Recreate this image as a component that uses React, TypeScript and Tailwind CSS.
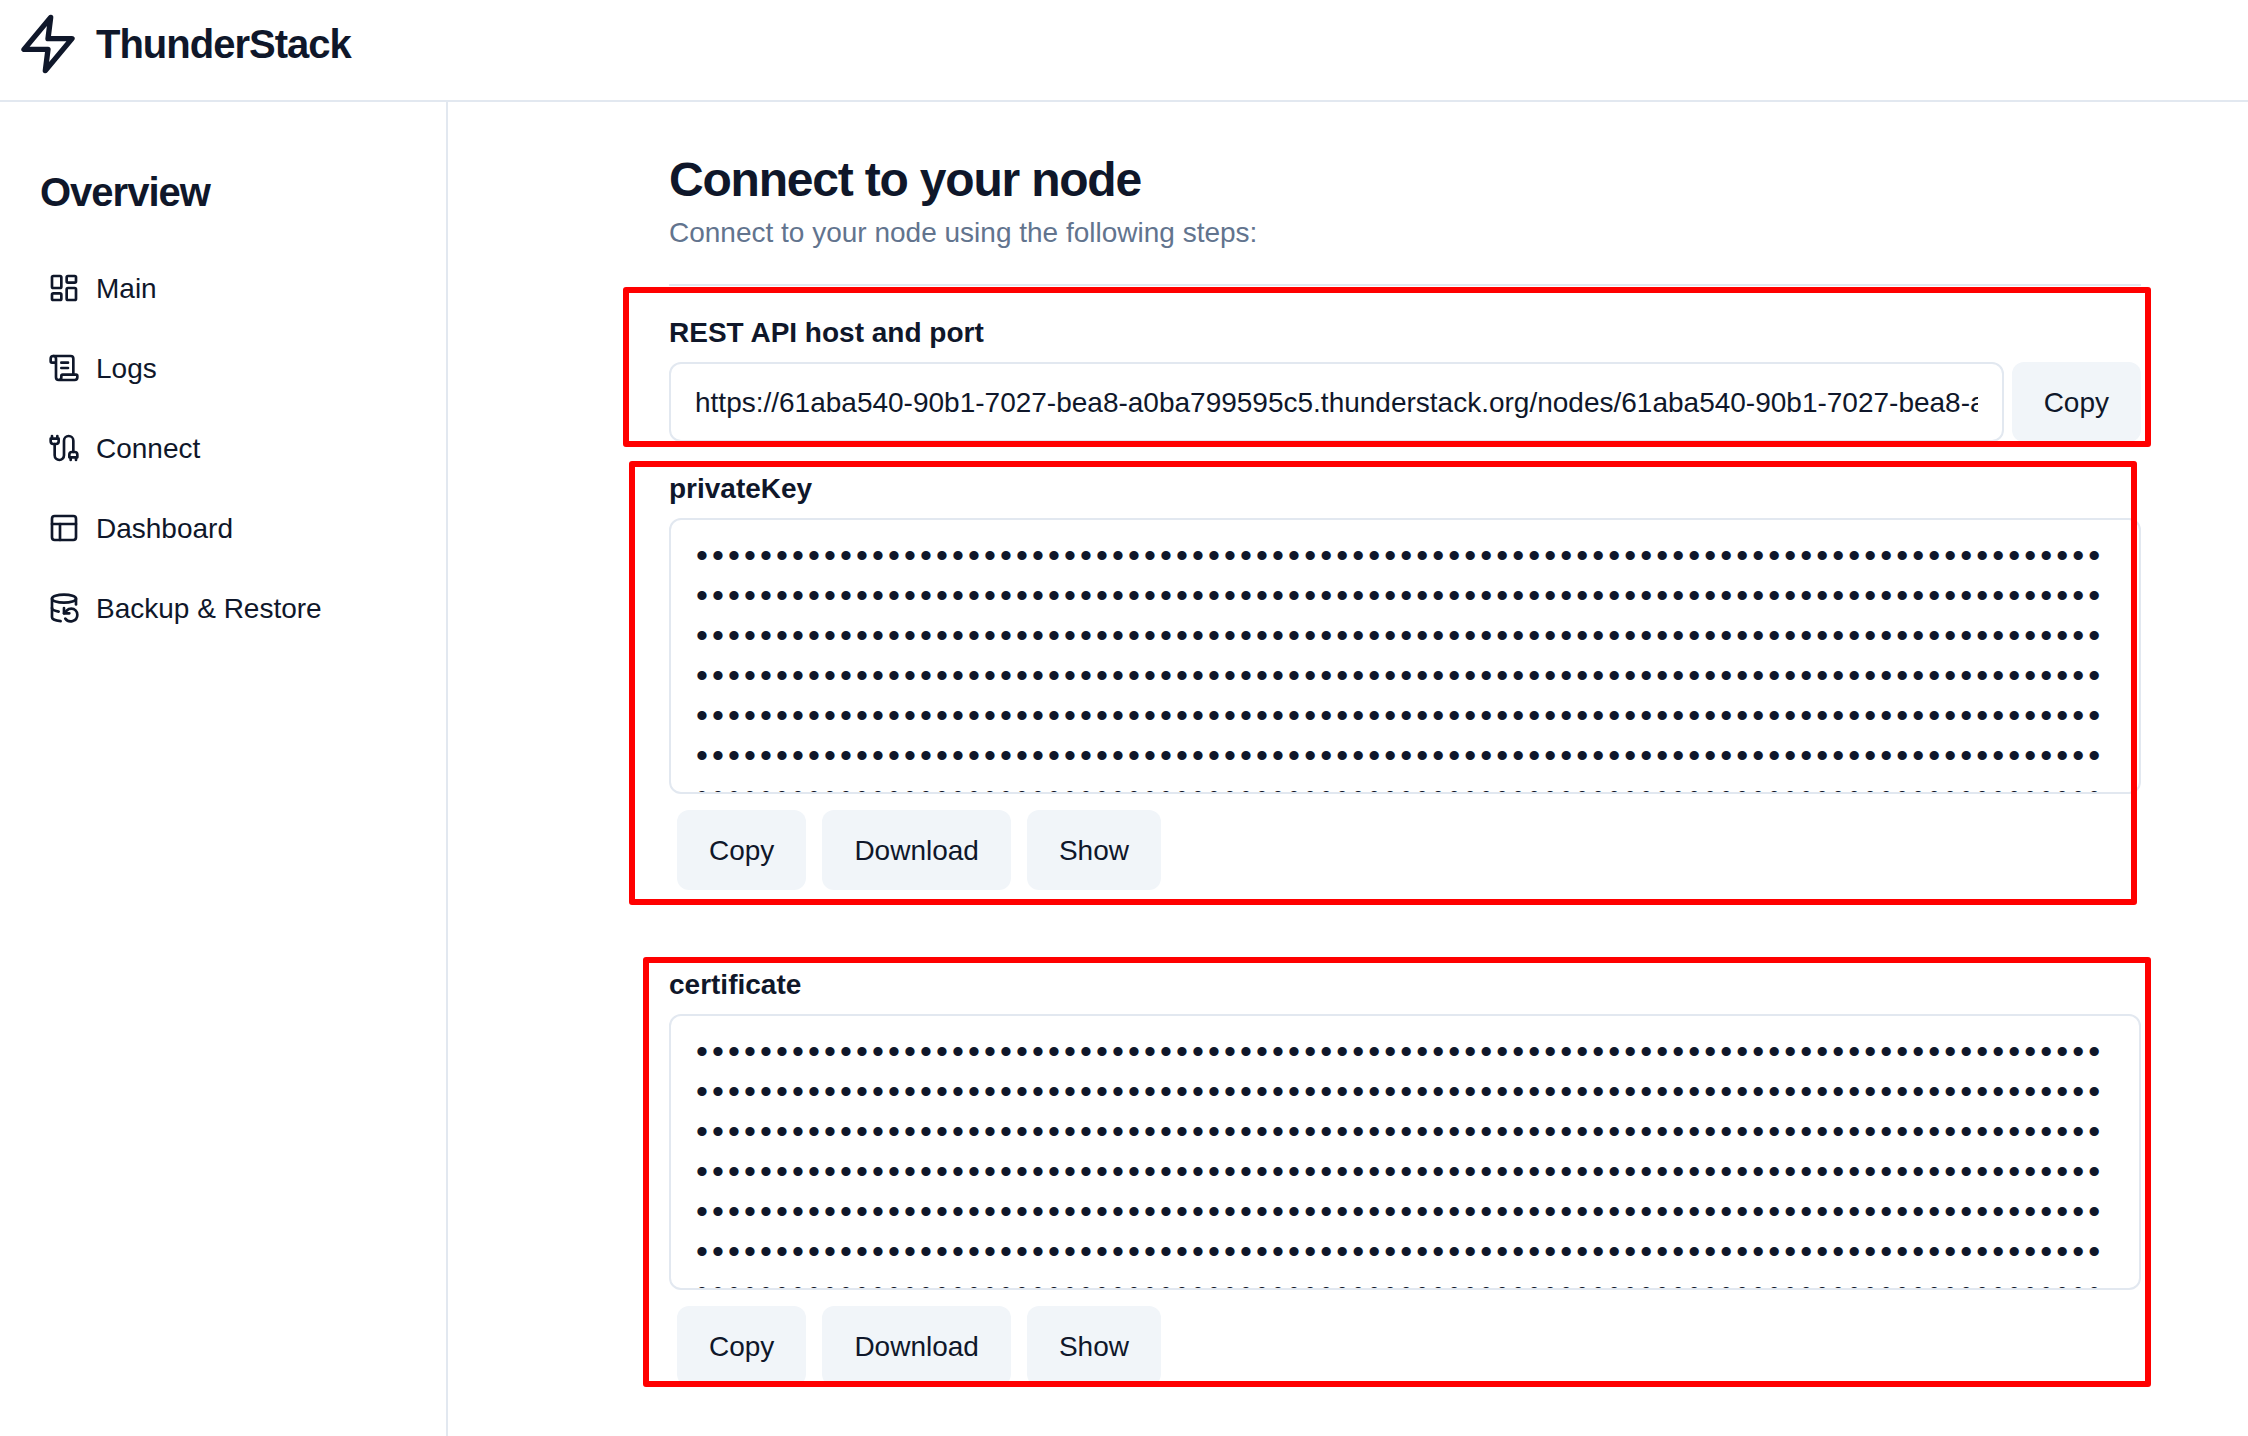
import React from "react";
import { LayoutDashboard, ScrollText, PanelsTopLeft, DatabaseBackup } from "lucide-react";

const API_URL =
  "https://61aba540-90b1-7027-bea8-a0ba799595c5.thunderstack.org/nodes/61aba540-90b1-7027-bea8-a0ba799595c5";

function ZapIcon({ className }: { className?: string }) {
  return (
    <svg className={className} viewBox="0 0 24 24" fill="none" stroke="currentColor" strokeWidth="2" strokeLinecap="round" strokeLinejoin="round">
      <polygon points="13 2 3 14 12 14 11 22 21 10 12 10 13 2" />
    </svg>
  );
}

function CableIcon({ className }: { className?: string }) {
  return (
    <svg className={className} viewBox="0 0 24 24" fill="none" stroke="currentColor" strokeWidth="2" strokeLinecap="round" strokeLinejoin="round">
      <path d="M4 9a2 2 0 0 1-2-2V5h6v2a2 2 0 0 1-2 2Z" />
      <path d="M3 5V3" />
      <path d="M7 5V3" />
      <path d="M19 15V6.5a3.5 3.5 0 0 0-7 0v11a3.5 3.5 0 0 1-7 0V9" />
      <path d="M17 21v-2" />
      <path d="M21 21v-2" />
      <path d="M22 19h-6v-2a2 2 0 0 1 2-2h2a2 2 0 0 1 2 2Z" />
    </svg>
  );
}

const NAV = [
  { label: "Main", Icon: LayoutDashboard },
  { label: "Logs", Icon: ScrollText },
  { label: "Connect", Icon: CableIcon },
  { label: "Dashboard", Icon: PanelsTopLeft },
  { label: "Backup & Restore", Icon: DatabaseBackup },
];

function Button({ children }: { children: React.ReactNode }) {
  return (
    <button className="h-20 shrink-0 rounded-xl bg-slate-100 px-8 pt-0.5 text-[28px] leading-10">{children}</button>
  );
}

const MASK_ROW = "•".repeat(88);

function SecretField({ label }: { label: string }) {
  return (
    <section>
      <h3 className="text-[28px] leading-10 font-bold">{label}</h3>
      <div className="mt-[9px] h-[276px] overflow-hidden rounded-xl border-2 border-slate-200 px-[25px] pt-[15px]">
        {Array.from({ length: 7 }, (_, i) => (
          <div key={i} className="h-10 text-[34px] leading-10 tracking-[4.1px] whitespace-nowrap">
            {MASK_ROW}
          </div>
        ))}
      </div>
      <div className="mt-4 ml-2 flex gap-4">
        <Button>Copy</Button>
        <Button>Download</Button>
        <Button>Show</Button>
      </div>
    </section>
  );
}

export default function App() {
  return (
    <div className="relative flex h-[1436px] w-[2248px] flex-col overflow-hidden bg-white font-['Liberation_Sans',Arial,sans-serif] text-[#0f172a]">
      <header className="flex h-[102px] shrink-0 items-start border-b-2 border-slate-200 px-4 pt-3">
        <div className="flex h-16 items-center gap-4">
          <ZapIcon className="size-16" />
          <span className="text-[40px] leading-[48px] font-bold tracking-tight">ThunderStack</span>
        </div>
      </header>
      <div className="flex min-h-0 flex-1">
        <aside className="w-[448px] shrink-0 border-r-2 border-slate-200 pt-[66px] pl-10">
          <h2 className="text-[40px] leading-[48px] font-bold tracking-tight">Overview</h2>
          <nav className="mt-8">
            {NAV.map(({ label, Icon }) => (
              <a key={label} className="flex h-20 items-center gap-4 pl-2 text-[28px] leading-10">
                <Icon className="size-8" />
                <span className="pt-0.5">{label}</span>
              </a>
            ))}
          </nav>
        </aside>
        <main className="ml-[221px] w-[1472px] shrink-0 pt-[50px]">
          <h1 className="text-5xl leading-[56px] font-bold tracking-tight">Connect to your node</h1>
          <p className="mt-[5px] text-[28px] leading-10 text-slate-500">
            Connect to your node using the following steps:
          </p>
          <hr className="mt-[31px] border-t-2 border-slate-200" />
          <section className="mt-[27px]">
            <h3 className="text-[28px] leading-10 font-bold">REST API host and port</h3>
            <div className="mt-[9px] flex gap-2">
              <div className="flex h-20 min-w-0 flex-1 items-center rounded-xl border-2 border-slate-200 px-6 pt-0.5">
                <span className="min-w-0 overflow-hidden text-[28px] leading-10 whitespace-nowrap">{API_URL}</span>
              </div>
              <Button>Copy</Button>
            </div>
          </section>
          <div className="mt-[27px] flex flex-col gap-[75px]">
            <SecretField label="privateKey" />
            <SecretField label="certificate" />
          </div>
        </main>
      </div>
      {/* Highlight frames laid over the form */}
      <div className="absolute top-[287px] left-[623px] h-[160px] w-[1528px] rounded-[3px] border-6 border-[#ff0000]" />
      <div className="absolute top-[461px] left-[629px] h-[444px] w-[1508px] rounded-[3px] border-6 border-[#ff0000]" />
      <div className="absolute top-[957px] left-[643px] h-[430px] w-[1508px] rounded-[3px] border-6 border-[#ff0000]" />
    </div>
  );
}
